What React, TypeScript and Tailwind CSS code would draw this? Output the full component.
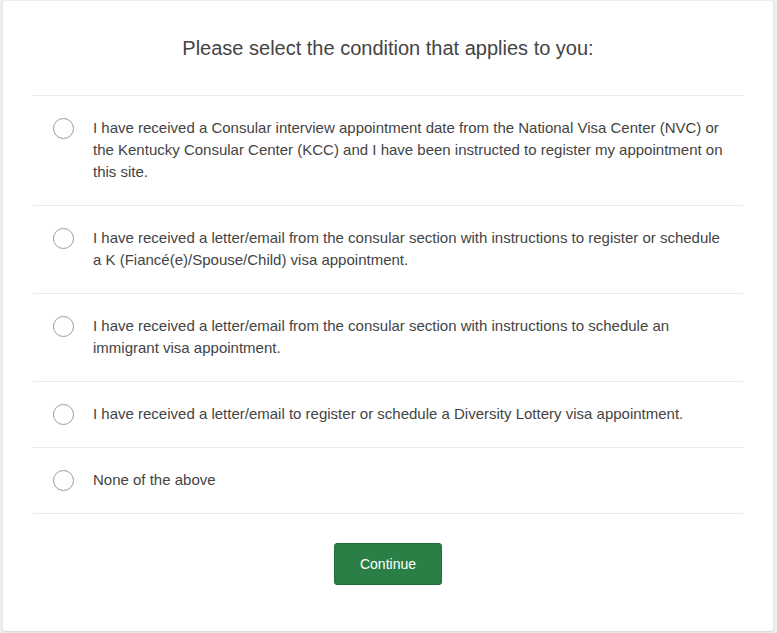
import React, { useState } from "react";

const options = [
  "I have received a Consular interview appointment date from the National Visa Center (NVC) or the Kentucky Consular Center (KCC) and I have been instructed to register my appointment on this site.",
  "I have received a letter/email from the consular section with instructions to register or schedule a K (Fiancé(e)/Spouse/Child) visa appointment.",
  "I have received a letter/email from the consular section with instructions to schedule an immigrant visa appointment.",
  "I have received a letter/email to register or schedule a Diversity Lottery visa appointment.",
  "None of the above",
];

const App = () => {
  const [selected, setSelected] = useState<number | null>(null);

  return (
    <div className="min-h-[633px] w-[777px] bg-[#efefef] pt-[1px] pl-[3px] font-['Liberation_Sans',Arial,sans-serif] text-[#444]">
      <div className="w-[770px] h-[630px] bg-white rounded-[3px] shadow-[0_1px_2px_rgba(0,0,0,0.12)] px-[30px]">
        <div className="h-[94px] flex items-center justify-center text-[20px] text-[#444]">
          Please select the condition that applies to you:
        </div>
        <div className="border-t border-[#eaeaea]">
          {options.map((text, i) => (
            <label
              key={i}
              className="flex items-start pt-[21px] pb-[22px] pl-[20px] pr-[18px] border-b border-[#eaeaea] cursor-pointer"
              onClick={() => setSelected(i)}
            >
              <span className="shrink-0 mr-[19px] mt-[1px] w-[21px] h-[21px] rounded-full border border-[#9a9a9a] flex items-center justify-center">
                {selected === i && <span className="w-[11px] h-[11px] rounded-full bg-[#2a7f46]" />}
              </span>
              <span className="text-[15px] leading-[22px] text-[#444]">{text}</span>
            </label>
          ))}
        </div>
        <div className="flex justify-center pt-[29px]">
          <button className="w-[108px] h-[42px] rounded-[3px] bg-[#2a7f46] border border-[#236d3b] text-white text-[14px]">
            Continue
          </button>
        </div>
      </div>
    </div>
  );
};

export default App;
